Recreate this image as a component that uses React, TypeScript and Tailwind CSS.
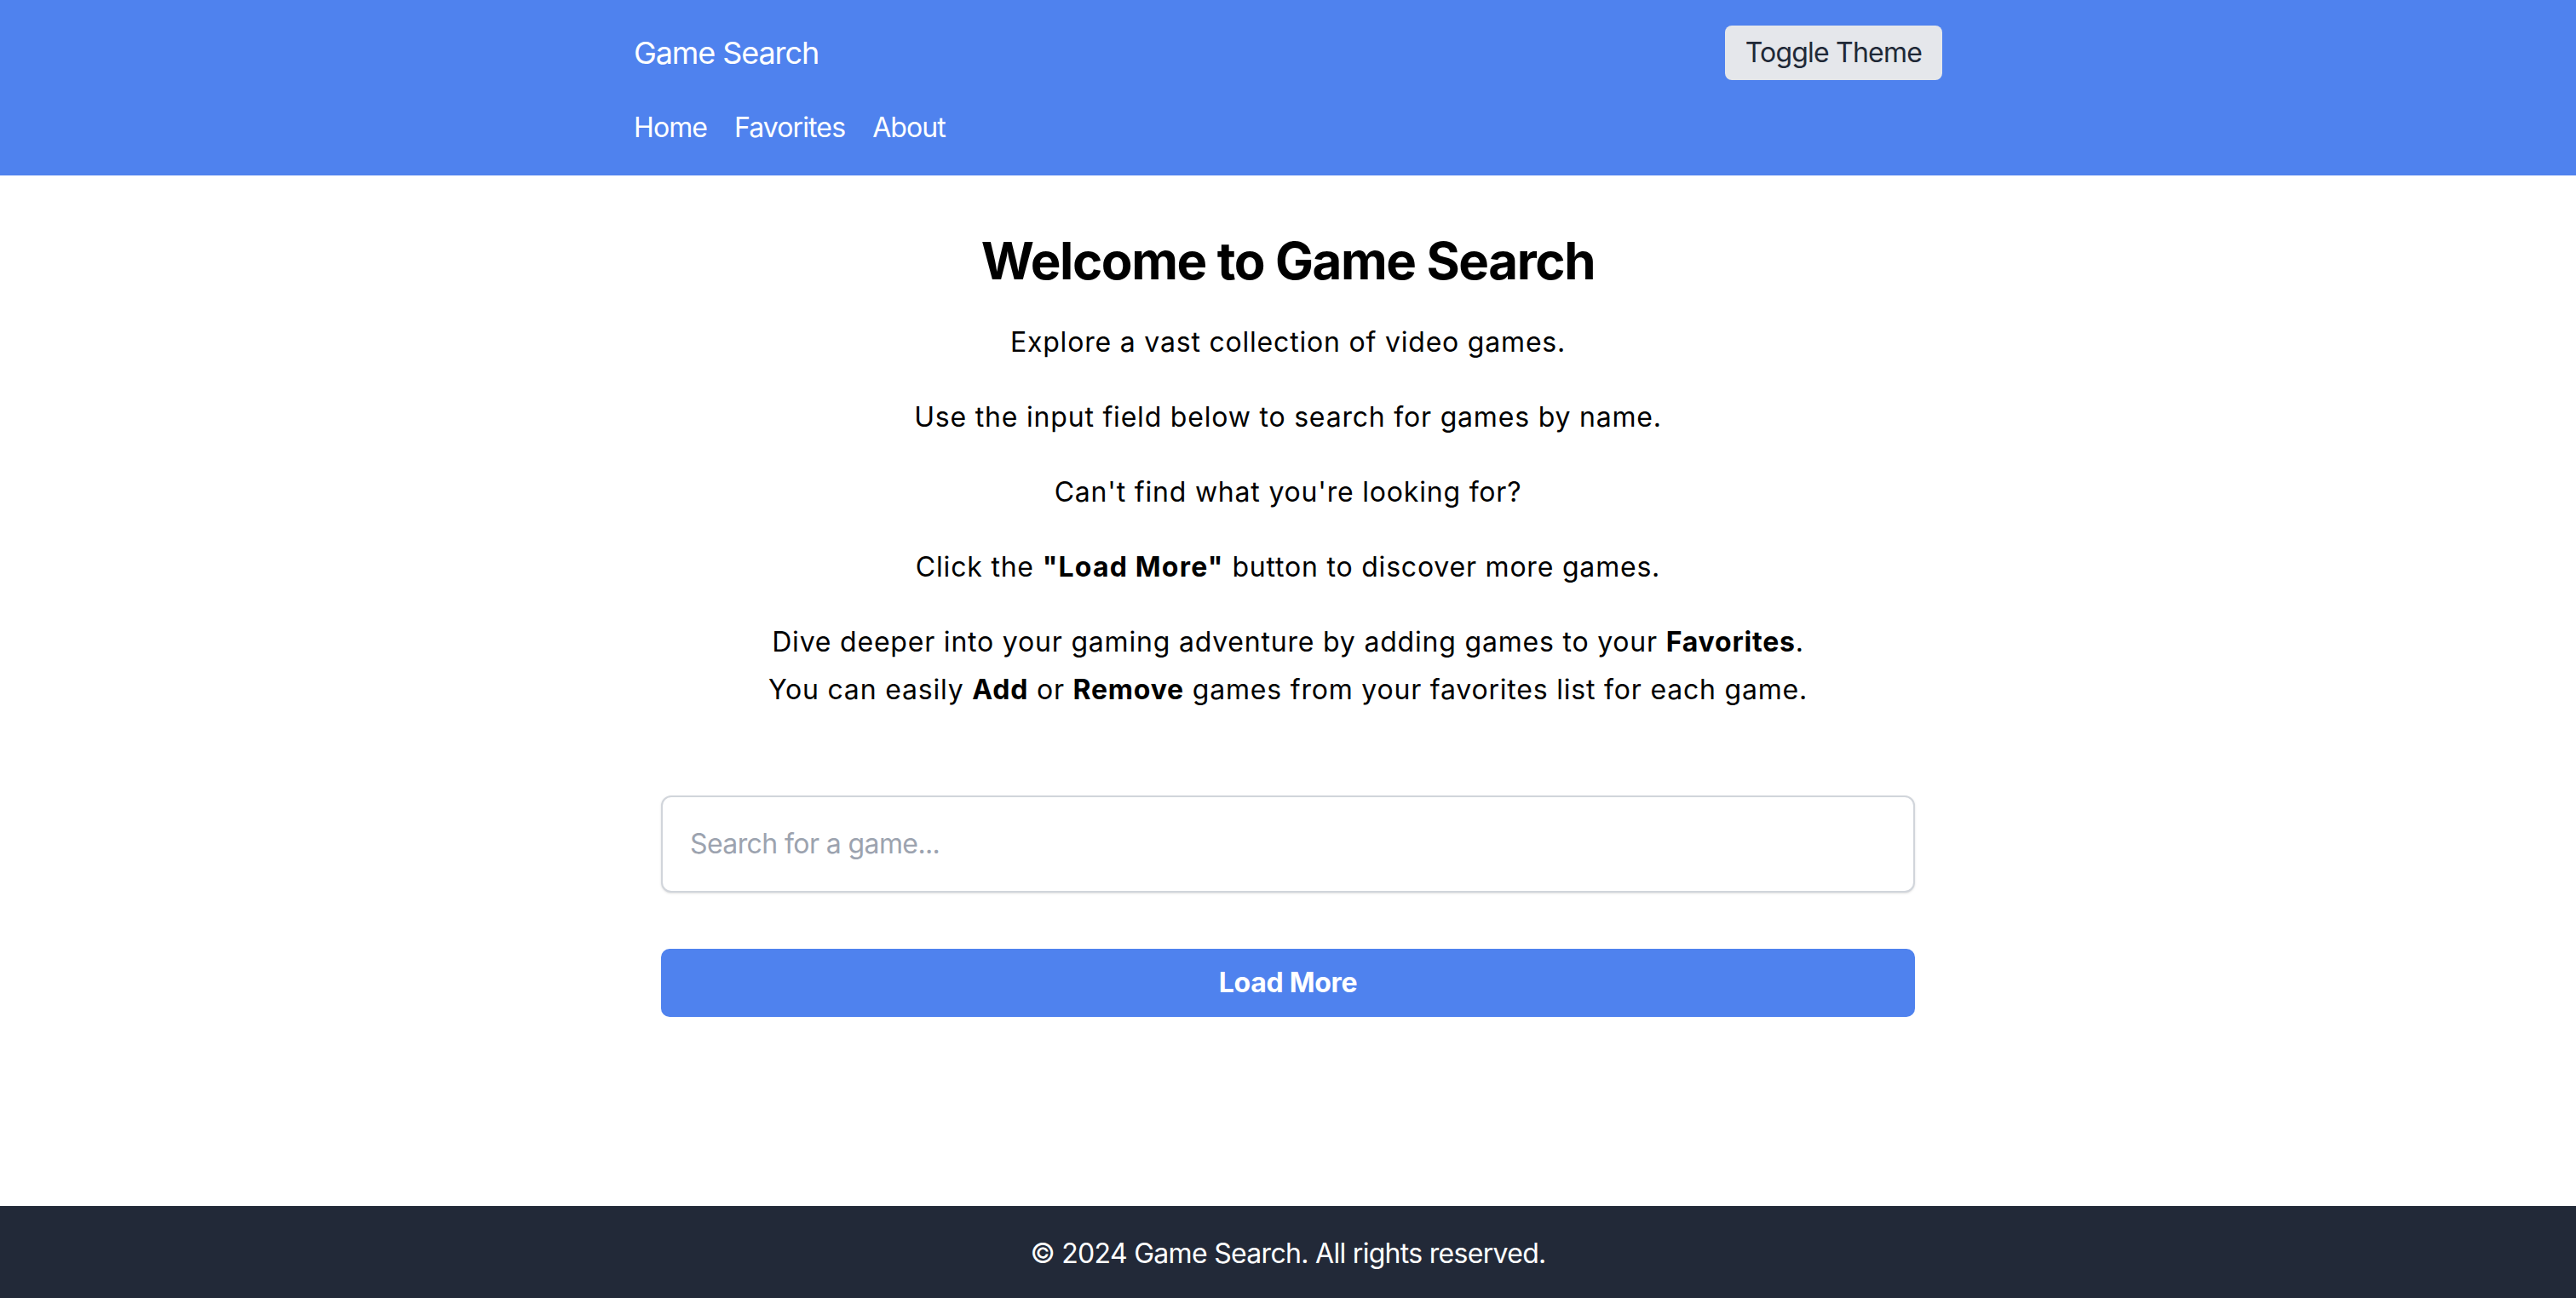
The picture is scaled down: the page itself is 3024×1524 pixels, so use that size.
import React from "react";

const Header = () => {
  return (
    <header className="bg-[#4f82ee] text-white">
      <div className="mx-auto w-[1536px] pt-[30px] pb-8">
        <div className="flex items-center justify-between">
          <h1 className="text-[36px] leading-[56px] tracking-[-1.1px]">Game Search</h1>
          <button className="rounded-lg bg-[#e5e7eb] px-6 py-2 text-[32px] leading-[48px] tracking-[-0.8px] text-[#1f2937]">
            Toggle Theme
          </button>
        </div>
        <nav className="mt-8 flex gap-8 text-[32px] leading-[48px] tracking-[-0.9px]">
          <a href="#">Home</a>
          <a href="#">Favorites</a>
          <a href="#">About</a>
        </nav>
      </div>
    </header>
  );
};

const Intro = () => {
  return (
    <div className="text-center text-black">
      <h2 className="mb-8 text-[60px] font-bold leading-[72px] tracking-[-1.4px]">Welcome to Game Search</h2>
      <div className="text-[32px] leading-[56px] tracking-[0.8px]">
        <p className="mb-8">Explore a vast collection of video games.</p>
        <p className="mb-8">Use the input field below to search for games by name.</p>
        <p className="mb-8">Can't find what you're looking for?</p>
        <p className="mb-8">
          Click the <strong className="font-bold tracking-[1.2px]">"Load More"</strong> button to discover more games.
        </p>
        <p className="mb-8">
          Dive deeper into your gaming adventure by adding games to your <strong className="font-bold">Favorites</strong>.
          <br />
          You can easily <strong className="font-bold">Add</strong> or <strong className="font-bold">Remove</strong> games
          from your favorites list for each game.
        </p>
      </div>
    </div>
  );
};

export default function App() {
  return (
    <div className="flex min-h-screen flex-col bg-white font-['Inter','Liberation_Sans',sans-serif]">
      <Header />
      <main className="flex-1 py-16">
        <div className="mx-auto w-[1536px] px-8">
          <Intro />
          <div className="mt-24">
            <input
              type="text"
              placeholder="Search for a game..."
              className="w-full rounded-xl border-2 border-[#d1d5db] bg-white px-8 py-[31px] text-[32px] leading-[48px] tracking-[-0.6px] text-black shadow-sm outline-none placeholder:text-[#9ca3af]"
            />
            <button className="mt-[66px] w-full rounded-[10px] bg-[#4f82ee] py-4 text-[32px] font-bold leading-[48px] tracking-[-0.3px] text-white">
              Load More
            </button>
          </div>
        </div>
      </main>
      <footer className="bg-[#222938] pt-8 pb-[28px] text-center text-[32px] leading-[48px] tracking-[-0.7px] text-white">
        © 2024 Game Search. All rights reserved.
      </footer>
    </div>
  );
}
